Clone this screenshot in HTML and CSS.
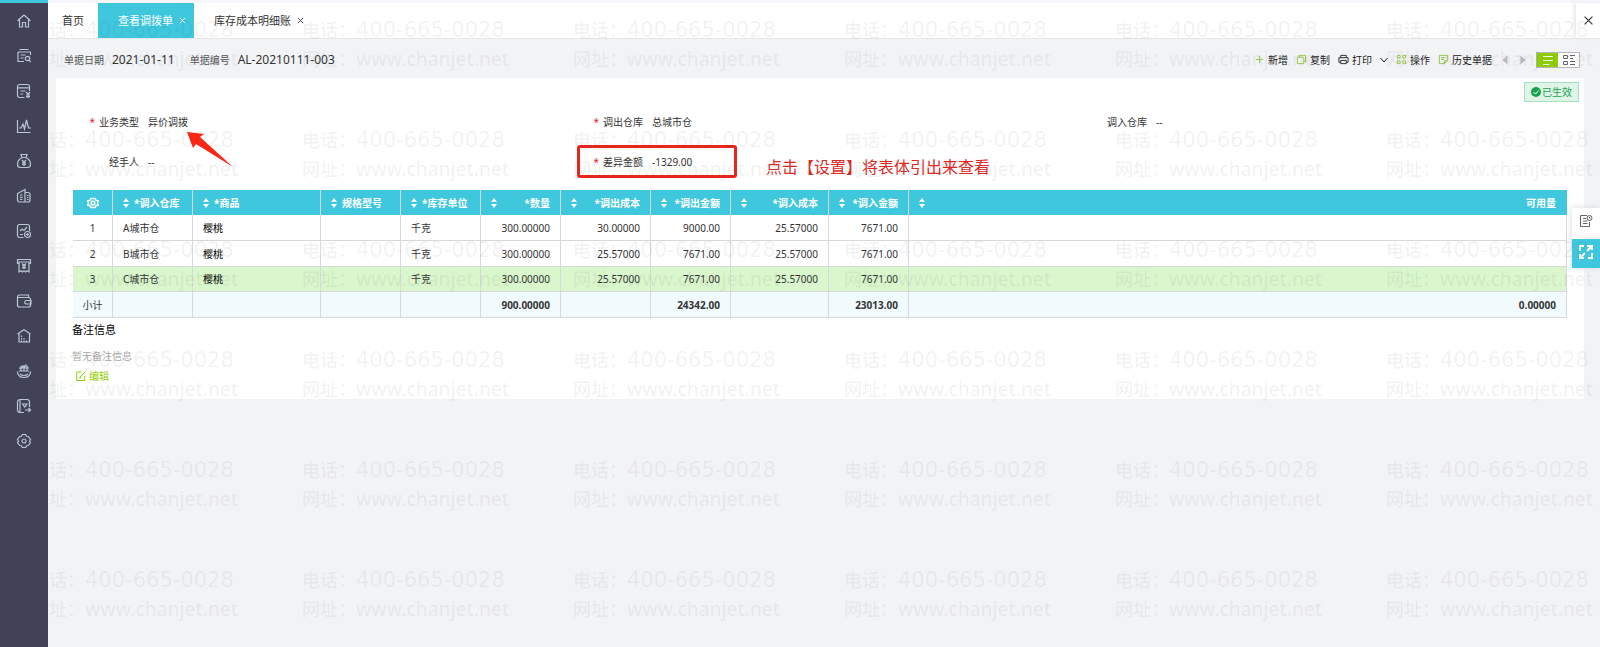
FILE: index.html
```html
<!DOCTYPE html>
<html lang="zh-CN">
<head>
<meta charset="utf-8">
<meta name="viewport" content="width=device-width, initial-scale=1">
<title>查看调拨单</title>
<link rel="stylesheet" href="styles.css">
</head>
<body>
<div class="app">
  <nav class="sidebar" aria-label="主导航">
    <a href="#" aria-label="首页"><svg viewBox="0 0 16 16"><path d="M1.5 7.8 8 2l6.5 5.8M3.5 6.5V14H6.500V9.500h3V14h3V6.500"/></svg></a>
    <a href="#" aria-label="单据查询"><svg viewBox="0 0 16 16"><path d="M3.500 1.500h9M2 4h12.500v3M2 4v9.500h6M4.500 7h5M4.500 10h3"/><circle cx="11.500" cy="10.500" r="2.200"/><path d="m13 12.200 1.700 2"/></svg></a>
    <a href="#" aria-label="采购"><svg viewBox="0 0 16 16"><path d="M8.500 14.500H3.500a2 2 0 0 1-2-2v-9a2 2 0 0 1 2-2h8a2 2 0 0 1 2 2V8M1.500 4.800h12M4.500 8h5M4.500 11h2.500M10 9l2 2.200L14 9M12 11.200V15M10 12h4M10 13.700h4"/></svg></a>
    <a href="#" aria-label="分析"><svg viewBox="0 0 16 16"><path d="M1.500 2v12.500h13M3 10h2l2-4 1.500 5L10.500 2l2 8H15"/></svg></a>
    <a href="#" aria-label="资金"><svg viewBox="0 0 16 16"><path d="M5 1.500h6L10 4.500H6zM6 4.500C3 6 1.500 8.500 1.500 11.500c0 2 1 3 3 3h7c2 0 3-1 3-3 0-3-1.500-5.500-4.500-7M6 7l2 2.200L10 7M8 9v4M6 9.800h4M6 11.500h4"/></svg></a>
    <a href="#" aria-label="资产"><svg viewBox="0 0 16 16"><path d="M9 14H3.500a2 2 0 0 1-2-2V5.500L9 1.500zM9 4.500h3a2 2 0 0 1 2 2V12a2 2 0 0 1-2 2H9M4 7h2.500M4 9.300h2.500M4 11.500h2.500M11 7.500h1.500M11 9.500h1.500M11 11.500h1.500"/></svg></a>
    <a href="#" aria-label="报表"><svg viewBox="0 0 16 16"><path d="M7.500 14.500h-4a2 2 0 0 1-2-2v-9a2 2 0 0 1 2-2h8a2 2 0 0 1 2 2V8M4 8l2-2 2 1.500L11 4M4 11.500h3"/><circle cx="11.500" cy="11.500" r="3"/><path d="M10 11.500h3M11.500 10v3"/></svg></a>
    <a href="#" aria-label="票据"><svg viewBox="0 0 16 16"><path d="M3 5.500H1.500v-4h13v4H13M3 4h10v10l-2-1.200L9.500 14 8 12.800 6.500 14 5 12.800 3 14zM6 5.500l2 2 2-2M8 7.500V11M6 8h4M6 9.800h4"/></svg></a>
    <a href="#" aria-label="钱包"><svg viewBox="0 0 16 16"><path d="M12.500 4.500V2H3.500a2 2 0 0 0-2 2v8a2 2 0 0 0 2 2h9a2 2 0 0 0 2-2V6.500a2 2 0 0 0-2-2H2M15 7.500h-4.500a1.700 1.700 0 0 0 0 3.500H15z"/></svg></a>
    <a href="#" aria-label="仓库"><svg viewBox="0 0 16 16"><path d="M1.500 6 8 1.800 14.500 6M3 5.500V14h10.500V5.500M5.500 7.500v1.500M5.500 10v1.500M8 10v1.500M5.500 12.500V14M8 12.500V14M10.500 12.500V14"/></svg></a>
    <a href="#" aria-label="服务"><svg viewBox="0 0 16 16"><path d="M1.500 8.500c0 4 2.500 6 6.500 6s6.500-2 6.500-6M4 11c2 2 6 2 8 0M3 8h10M4 6l2-3 2 2 2-3 2 3M5 3v5M8 2v6M11 3v5M3 5h10"/></svg></a>
    <a href="#" aria-label="收藏"><svg viewBox="0 0 16 16"><path d="M8 14.500H4a2.500 2.500 0 0 1-2.500-2.500V4A2.500 2.500 0 0 1 4 1.500h7A2.500 2.500 0 0 1 13.500 4v5M4 2v12M6.500 6l2.200 3L11 6zM9 12h5.500M12.500 10l2 2-2 2"/></svg></a>
    <a href="#" aria-label="设置"><svg viewBox="0 0 16 16"><path d="M6.300 1.500h3.400l.7 1.800 1.900.2 2.200 3L13.500 8l1 1.500-2.200 3-1.900.2-.7 1.800H6.300l-.7-1.800-1.900-.2-2.200-3L2.500 8l-1-1.500 2.200-3 1.900-.2z"/><circle cx="8" cy="8" r="2"/></svg></a>
  </nav>

  <div class="workspace">
    <header class="tabs">
      <a class="tab" href="#">首页</a>
      <div class="tab tab-active"><a href="#">查看调拨单</a><button class="tab-close" aria-label="关闭查看调拨单"><svg viewBox="0 0 8 8"><path d="m1 1 6 6M7 1 1 7"/></svg></button></div>
      <div class="tab"><a href="#">库存成本明细账</a><button class="tab-close" aria-label="关闭库存成本明细账"><svg viewBox="0 0 8 8"><path d="m1 1 6 6M7 1 1 7"/></svg></button></div>
      <button class="close-page" aria-label="关闭"><svg viewBox="0 0 8 8"><path d="m0.500 0.500 7 7M7.500 0.500l-7 7"/></svg></button>
    </header>

    <div class="toolbar">
      <dl class="doc-meta">
        <dt>单据日期</dt><dd>2021-01-11</dd>
        <dt>单据编号</dt><dd>AL-20210111-003</dd>
      </dl>
      <div class="actions">
        <button class="action"><svg class="green" viewBox="0 0 12 12"><path d="M6 2v8M2 6h8"/></svg>新增</button>
        <button class="action"><svg class="green" viewBox="0 0 12 12"><path d="M3.500 1.500h7v7M1.500 3.500h7v7h-7zM8.500 8.500h2M3.500 1.500v2"/></svg>复制</button>
        <button class="action"><svg viewBox="0 0 12 12"><path d="M3 4V1.500h6V4M3 9H1V4h10v5H9M3 7h6v3.500H3z"/></svg>打印</button>
        <button class="chevron" aria-label="更多打印选项"><svg viewBox="0 0 8 8"><path d="m0.500 2 3.500 4 3.500-4"/></svg></button>
        <button class="action"><svg class="green" viewBox="0 0 12 12"><path d="M1.500 1.500h3v3h-3zM7.500 1.500h3v3h-3zM1.500 7.500h3v3h-3zM7.500 7.500h3v3h-3z"/></svg>操作</button>
        <button class="action"><svg class="green" viewBox="0 0 12 12"><path d="M7 10.500H1.500v-9h9V7L7 10.500V7.500h3.500M3.500 4h5M3.500 6h3"/></svg>历史单据</button>
        <button class="pager" aria-label="上一张"><svg viewBox="0 0 6 10"><path d="M5.500 0.500v9L.5 5z"/></svg></button>
        <button class="pager" aria-label="下一张"><svg viewBox="0 0 6 10"><path d="M.5.500v9L5.500 5z"/></svg></button>
        <div class="view-switch">
          <button class="view view-on" aria-label="列表视图"><svg viewBox="0 0 12 10"><path d="M1 1.500h10M1 5.500h10M1 9.500h6"/></svg></button>
          <button class="view" aria-label="卡片视图"><svg viewBox="0 0 12 10"><path d="M.5.500h4v3h-4zM.5 6.500h4v3h-4zM7 .5h5M7 3.500h3M7 6.500h5M7 9.500h5"/></svg></button>
        </div>
      </div>
    </div>

    <main class="card">
      <div class="status-row"><span class="status"><svg viewBox="0 0 10 10"><circle cx="5" cy="5" r="5"/><path d="M2.500 5 4.500 7l3.200-3.500"/></svg>已生效</span></div>
      <dl class="fields">
        <div class="field"><dt class="required">业务类型</dt><dd>异价调拨
          <svg class="arrow" viewBox="0 0 46 36"><path d="M0 0 17 2l-4 3 33 30-37-23-3 4z"/></svg></dd></div>
        <div class="field"><dt class="required">调出仓库</dt><dd>总城市仓</dd></div>
        <div class="field"><dt>调入仓库</dt><dd>--</dd></div>
        <div class="field"><dt>经手人</dt><dd>--</dd></div>
        <div class="field marked"><dt class="required">差异金额</dt><dd>-1329.00</dd><dd class="note">点击【设置】将表体引出来查看</dd></div>
      </dl>

      <table class="lines">
        <colgroup><col class="w40"><col class="w80"><col class="w128"><col class="w80"><col class="w80"><col class="w80"><col class="w90"><col class="w80"><col class="w98"><col class="w80"><col></colgroup>
        <thead>
          <tr>
            <th class="index"><button aria-label="表格设置"><svg class="gear" viewBox="0 0 16 16"><path d="M5 2h6l1 2.500 3 .5-1 3 1 3-3 .5-1 2.500H5l-1-2.500L1 11l1-3-1-3 3-.5z"/><circle cx="8" cy="8" r="2.500"/></svg></button></th>
            <th><div class="head"><svg class="sort" viewBox="0 0 6 10"><path d="M3 0l3 4H0zM0 6h6L3 10z"/></svg><span>*调入仓库</span></div></th>
            <th><div class="head"><svg class="sort" viewBox="0 0 6 10"><path d="M3 0l3 4H0zM0 6h6L3 10z"/></svg><span>*商品</span></div></th>
            <th><div class="head"><svg class="sort" viewBox="0 0 6 10"><path d="M3 0l3 4H0zM0 6h6L3 10z"/></svg><span>规格型号</span></div></th>
            <th><div class="head"><svg class="sort" viewBox="0 0 6 10"><path d="M3 0l3 4H0zM0 6h6L3 10z"/></svg><span>*库存单位</span></div></th>
            <th><div class="head spread"><svg class="sort" viewBox="0 0 6 10"><path d="M3 0l3 4H0zM0 6h6L3 10z"/></svg><span>*数量</span></div></th>
            <th><div class="head spread"><svg class="sort" viewBox="0 0 6 10"><path d="M3 0l3 4H0zM0 6h6L3 10z"/></svg><span>*调出成本</span></div></th>
            <th><div class="head spread"><svg class="sort" viewBox="0 0 6 10"><path d="M3 0l3 4H0zM0 6h6L3 10z"/></svg><span>*调出金额</span></div></th>
            <th><div class="head spread"><svg class="sort" viewBox="0 0 6 10"><path d="M3 0l3 4H0zM0 6h6L3 10z"/></svg><span>*调入成本</span></div></th>
            <th><div class="head spread"><svg class="sort" viewBox="0 0 6 10"><path d="M3 0l3 4H0zM0 6h6L3 10z"/></svg><span>*调入金额</span></div></th>
            <th><div class="head spread"><svg class="sort" viewBox="0 0 6 10"><path d="M3 0l3 4H0zM0 6h6L3 10z"/></svg><span>可用量</span></div></th>
          </tr>
        </thead>
        <tbody>
          <tr><td class="index">1</td><td>A城市仓</td><td class="strong">樱桃</td><td></td><td>千克</td><td class="num">300.00000</td><td class="num">30.00000</td><td class="num">9000.00</td><td class="num">25.57000</td><td class="num">7671.00</td><td></td></tr>
          <tr><td class="index">2</td><td>B城市仓</td><td class="strong">樱桃</td><td></td><td>千克</td><td class="num">300.00000</td><td class="num">25.57000</td><td class="num">7671.00</td><td class="num">25.57000</td><td class="num">7671.00</td><td></td></tr>
          <tr class="selected"><td class="index">3</td><td>C城市仓</td><td class="strong">樱桃</td><td></td><td>千克</td><td class="num">300.00000</td><td class="num">25.57000</td><td class="num">7671.00</td><td class="num">25.57000</td><td class="num">7671.00</td><td></td></tr>
        </tbody>
        <tfoot>
          <tr><td class="index">小计</td><td></td><td></td><td></td><td></td><td class="num">900.00000</td><td></td><td class="num">24342.00</td><td></td><td class="num">23013.00</td><td class="num">0.00000</td></tr>
        </tfoot>
      </table>

      <section class="remarks">
        <h2>备注信息</h2>
        <p>暂无备注信息</p>
        <button class="edit"><svg viewBox="0 0 10 10"><path d="M5.500 1H.8v8.500h8V5M3.500 6.500 9.300.8M3.200 7l2-.5"/></svg>编辑</button>
      </section>
    </main>
  </div>

  <aside class="side-tools">
    <button aria-label="单据记录"><svg viewBox="0 0 14 14"><path d="M8 1.500H1.500v11h9V8M4 4.500h3M4 7h4.500M4 9.500h4.500"/><circle cx="10.500" cy="4" r="2.500"/><path d="M10.500 2.800V4h1"/></svg></button>
    <button class="expand" aria-label="全屏"><svg viewBox="0 0 14 14"><path d="M5 1H1v5M8 1h5v4M13 8v5H9M1 9v4h4M13 1 8 6M1 13l5-5"/></svg></button>
  </aside>

  <div class="watermark" aria-hidden="true"></div>
</div>
<script src="watermark.js"></script>
</body>
</html>
```
FILE: styles.css
```css
* { box-sizing: border-box; }

body {
  margin: 0;
  background: #f2f3f5;
  color: #333;
  font: 10px/16px "Noto Sans", "Noto Sans CJK SC", sans-serif;
}

button {
  display: inline-flex;
  align-items: center;
  justify-content: center;
  margin: 0;
  padding: 0;
  border: 0;
  background: none;
  color: inherit;
  font: inherit;
  cursor: pointer;
}

a { color: inherit; text-decoration: none; }
dl, dd, h2, p { margin: 0; }
svg { display: block; fill: none; stroke: currentColor; }

.app {
  position: relative;
  display: flex;
  min-height: 100vh;
  overflow: hidden;
}

.sidebar {
  display: flex;
  flex: 0 0 48px;
  flex-direction: column;
  border-top: 3px solid #3fc7de;
  background: #424257;
  color: #b9c6d3;
}

.sidebar a {
  display: grid;
  place-items: center;
  height: 35px;
}

.sidebar svg { width: 16px; height: 16px; stroke-width: 1.2; }

.workspace { flex: 1; min-width: 0; }

.tabs {
  display: flex;
  border-top: 3px solid #f5f7fb;
  border-bottom: 1px solid #e4e6e8;
  background: #fff;
  font-size: 11px;
}

.tab {
  display: flex;
  align-items: center;
  gap: 6px;
  height: 35px;
  padding: 0 14px;
}

.tab + .tab { padding-left: 20px; }

.tab-active {
  background: #3fc7de;
  color: #fff;
}

.tab-active.tab-active { padding-right: 8px; }
.tab-close svg { width: 7px; height: 7px; }

.close-page {
  width: 24px;
  margin-left: auto;
  box-shadow: -2px 0 4px #e6e7e9;
}

.close-page svg { width: 9px; height: 9px; }

.toolbar {
  display: flex;
  align-items: center;
  justify-content: space-between;
  min-height: 39px;
  padding: 2px 20px 0 16px;
}

.doc-meta { display: flex; align-items: center; gap: 8px; }
.doc-meta dt { color: #555; }
.doc-meta dd { font-size: 12px; }
.doc-meta dd + dt { margin-left: 7px; }

.actions { display: flex; align-items: center; gap: 8px; color: #222; }
.action { gap: 3px; }
.action svg { width: 11px; height: 11px; }
.action .green { color: #8fc63d; }
.chevron svg { width: 8px; height: 8px; }
.pager { padding: 0 2px; color: #b7b9bc; }
.pager svg { width: 6px; height: 10px; fill: currentColor; stroke: none; }

.view-switch {
  display: flex;
  border: 1px solid #b4b6b8;
  background: #fff;
  color: #666;
}

.view { width: 21px; height: 14px; }
.view svg { width: 12px; height: 10px; }
.view-on { background: #8fce00; color: #fff; }

.card {
  margin: 0 16px 0 8px;
  padding: 4px 0 14px;
  background: #fff;
}

.status-row { display: flex; justify-content: flex-end; padding-right: 5px; }

.status {
  display: flex;
  align-items: center;
  gap: 1px;
  height: 20px;
  padding: 0 6px;
  border: 1px solid #a9dfc0;
  background: #dff5e8;
  color: #1aa34f;
}

.status svg { width: 10px; height: 10px; }
.status circle { fill: #1aa34f; stroke: none; }
.status path { stroke: #fff; }

.fields {
  display: grid;
  grid-template-columns: repeat(3, 1fr);
  margin: 0 8px 8px;
}

.field {
  position: relative;
  display: flex;
  align-items: center;
  gap: 9px;
  height: 40px;
}

.field dt { width: 75px; text-align: right; }
.field dd { position: relative; }

.required::before {
  content: "*";
  margin-right: 4px;
  color: #e0281e;
}

.marked::before {
  content: "";
  position: absolute;
  box-sizing: border-box;
  top: 3px;
  left: 9px;
  width: 160px;
  height: 33px;
  border: 3px solid #e8261c;
  border-radius: 3px;
}

.field .note {
  position: absolute;
  top: 13px;
  left: 198px;
  color: #dd2a1f;
  font-size: 16px;
  line-height: 24px;
  white-space: nowrap;
}

.arrow {
  position: absolute;
  top: 18px;
  left: 39px;
  width: 46px;
  height: 36px;
  fill: #fb2613;
  stroke: none;
}

.lines {
  width: calc(100% - 34px);
  margin: 0 17px;
  border-collapse: separate;
  border-spacing: 0;
  table-layout: fixed;
}

.w40 { width: 40px; }
.w80 { width: 80px; }
.w90 { width: 90px; }
.w98 { width: 98px; }
.w128 { width: 128px; }

.lines th, .lines td {
  border-right: 1px solid #d6d9db;
  text-align: left;
}

.lines th {
  height: 25px;
  padding: 0 10px;
  background: #3fc7de;
  color: #fff;
}

.lines th:last-child { border-right-color: #3fc7de; }

.lines td {
  height: 26px;
  padding: 0 10px;
  border-bottom: 1px solid #d6d9db;
}

.lines .selected td { height: 25px; background: #d9f6cc; }
.lines tfoot td { background: #f1fbfe; }
.lines tfoot .num { font-weight: 700; }
.lines .num { text-align: right; }
.lines .strong { color: #000; }

.lines .index { padding: 0; text-align: center; }
.lines th.index button { display: flex; width: 100%; }

.head { display: flex; align-items: center; gap: 5px; }
.spread { justify-content: space-between; }
.sort { width: 6px; height: 10px; fill: currentColor; stroke: none; }
.gear { width: 12px; height: 12px; stroke-width: 2; }

.remarks { padding: 4px 16px 0; }
.remarks h2 { color: #000; font-size: 11px; line-height: 16px; font-weight: 400; }
.remarks p { margin-top: 10px; color: #aaa; }
.edit { gap: 3px; margin: 4px 0 0 4px; color: #8fce00; }
.edit svg { width: 10px; height: 10px; }

.side-tools {
  position: absolute;
  top: 208px;
  right: 0;
  display: flex;
  flex-direction: column;
  gap: 2px;
  box-shadow: 0 0 6px #d8d9dc;
}

.side-tools button {
  width: 28px;
  height: 29px;
  padding-bottom: 4px;
  background: #fff;
  color: #666;
}

.side-tools .expand { background: #3fc7de; color: #fff; }
.side-tools svg { width: 14px; height: 14px; }
.side-tools .expand svg { stroke-width: 2; }

.watermark {
  position: absolute;
  inset: 0;
  display: grid;
  grid-auto-rows: 110px;
  padding: 16px 0 0 31px;
  margin-right: -271px;
  overflow: hidden;
  color: rgba(60, 60, 70, 0.07);
  font-size: 18px;
  font-weight: 500;
  line-height: 29px;
  pointer-events: none;
  white-space: nowrap;
}

.watermark p { display: flex; }
.watermark .phone { font-family: "DejaVu Sans", sans-serif; font-size: 21px; }
.watermark .site { font-size: 19px; }
```
FILE: watermark.js
```js
// Fills the overlay with enough contact stamps to cover the page.
const layer = document.querySelector('.watermark');
const columns = Math.ceil(window.innerWidth / 271);
const rows = Math.ceil(window.innerHeight / 110);
layer.style.gridTemplateColumns = `repeat(${columns}, 271px)`;
for (let i = 0; i < columns * rows; i++) {
  const stamp = document.createElement('div');
  stamp.innerHTML =
    '<p>电话：<span class="phone">400-665-0028</span></p>' +
    '<p>网址：<span class="site">www.chanjet.net</span></p>';
  layer.append(stamp);
}
```
